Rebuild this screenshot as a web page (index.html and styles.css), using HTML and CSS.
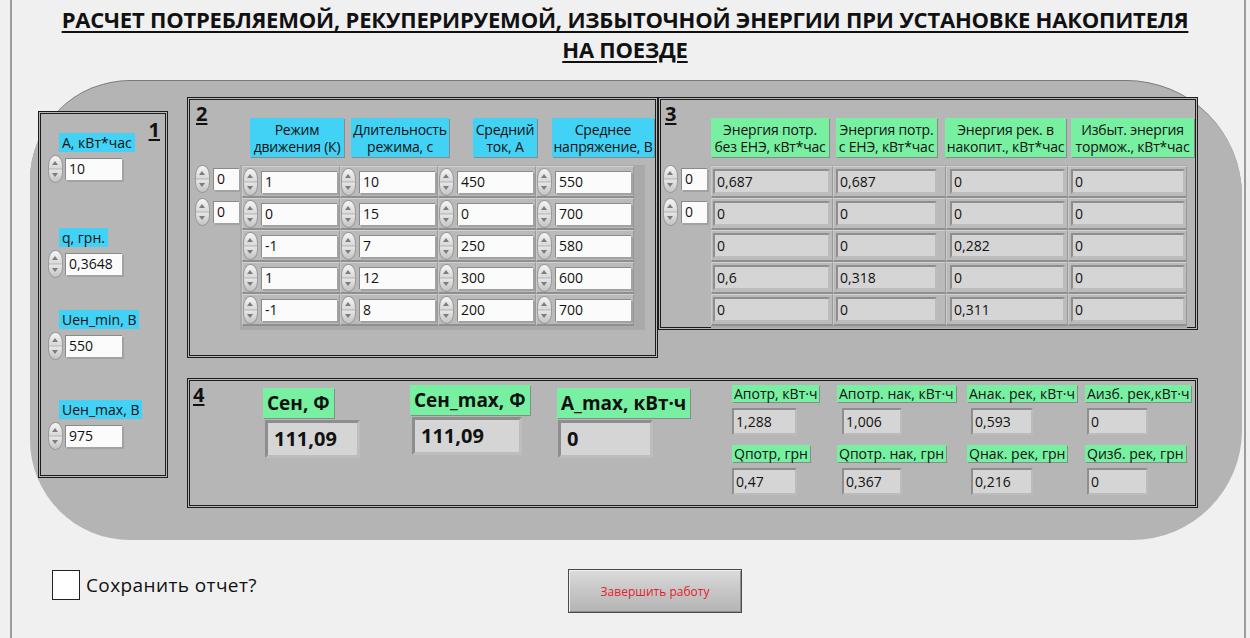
FILE: index.html
```html
<!DOCTYPE html>
<html lang="ru">
<head>
<meta charset="utf-8">
<title>Расчет энергии накопителя</title>
<link rel="stylesheet" href="styles.css">
</head>
<body>
<div class="window">
  <h1 class="title">РАСЧЕТ ПОТРЕБЛЯЕМОЙ, РЕКУПЕРИРУЕМОЙ, ИЗБЫТОЧНОЙ ЭНЕРГИИ ПРИ УСТАНОВКЕ НАКОПИТЕЛЯ<br>НА ПОЕЗДЕ</h1>

  <div class="deck">
    <!-- 1: input parameters -->
    <section class="panel p1">
      <div class="p1-head">
        <div class="ctl">
          <span class="lbl cyan">А, кВт*час</span>
          <div class="spinrow"><i class="spin"></i><span class="inp w57">10</span></div>
        </div>
        <div class="num">1</div>
      </div>
      <div class="ctl c2">
        <span class="lbl cyan">q, грн.</span>
        <div class="spinrow"><i class="spin"></i><span class="inp w57">0,3648</span></div>
      </div>
      <div class="ctl c3">
        <span class="lbl cyan">Uен_min, В</span>
        <div class="spinrow"><i class="spin"></i><span class="inp w57">550</span></div>
      </div>
      <div class="ctl c4">
        <span class="lbl cyan">Uен_max, В</span>
        <div class="spinrow"><i class="spin"></i><span class="inp w57">975</span></div>
      </div>
    </section>

    <div class="stack">
      <div class="top-row">
        <!-- 2: driving modes -->
        <section class="panel p2">
          <div class="phead">
            <div class="numcell n2"><span class="num">2</span></div>
            <div class="hdrs h2row">
              <div class="hdr cyan">Режим<br>движения (К)</div>
              <div class="hdr cyan">Длительность<br>режима, с</div>
              <div class="hdr cyan">Средний<br>ток, А</div>
              <div class="hdr cyan">Среднее<br>напряжение, В</div>
            </div>
          </div>
          <div class="pbody">
            <div class="idx i2">
              <div class="spinrow"><i class="spin"></i><span class="inp w26">0</span></div>
              <div class="spinrow"><i class="spin"></i><span class="inp w26">0</span></div>
            </div>
            <div class="arr arr2">
              <div class="slot"><i class="spin"></i><span class="inp w76">1</span></div>
              <div class="slot"><i class="spin"></i><span class="inp w76">10</span></div>
              <div class="slot"><i class="spin"></i><span class="inp w76">450</span></div>
              <div class="slot"><i class="spin"></i><span class="inp w76">550</span></div>

              <div class="slot"><i class="spin"></i><span class="inp w76">0</span></div>
              <div class="slot"><i class="spin"></i><span class="inp w76">15</span></div>
              <div class="slot"><i class="spin"></i><span class="inp w76">0</span></div>
              <div class="slot"><i class="spin"></i><span class="inp w76">700</span></div>

              <div class="slot"><i class="spin"></i><span class="inp w76">-1</span></div>
              <div class="slot"><i class="spin"></i><span class="inp w76">7</span></div>
              <div class="slot"><i class="spin"></i><span class="inp w76">250</span></div>
              <div class="slot"><i class="spin"></i><span class="inp w76">580</span></div>

              <div class="slot"><i class="spin"></i><span class="inp w76">1</span></div>
              <div class="slot"><i class="spin"></i><span class="inp w76">12</span></div>
              <div class="slot"><i class="spin"></i><span class="inp w76">300</span></div>
              <div class="slot"><i class="spin"></i><span class="inp w76">600</span></div>

              <div class="slot"><i class="spin"></i><span class="inp w76">-1</span></div>
              <div class="slot"><i class="spin"></i><span class="inp w76">8</span></div>
              <div class="slot"><i class="spin"></i><span class="inp w76">200</span></div>
              <div class="slot"><i class="spin"></i><span class="inp w76">700</span></div>
            </div>
          </div>
        </section>

        <!-- 3: energy per mode -->
        <section class="panel p3">
          <div class="phead">
            <div class="numcell n3"><span class="num">3</span></div>
            <div class="hdrs h3row">
              <div class="hdr green">Энергия потр.<br>без ЕНЭ, кВт*час</div>
              <div class="hdr green">Энергия потр.<br>с ЕНЭ, кВт*час</div>
              <div class="hdr green">Энергия рек. в<br>накопит., кВт*час</div>
              <div class="hdr green">Избыт. энергия<br>тормож., кВт*час</div>
            </div>
          </div>
          <div class="pbody">
            <div class="idx i3">
              <div class="spinrow"><i class="spin"></i><span class="inp w26">0</span></div>
              <div class="spinrow"><i class="spin"></i><span class="inp w26">0</span></div>
            </div>
            <div class="arr arr3">
              <div class="slot"><span class="ind">0,687</span></div>
              <div class="slot"><span class="ind">0,687</span></div>
              <div class="slot"><span class="ind">0</span></div>
              <div class="slot"><span class="ind">0</span></div>

              <div class="slot"><span class="ind">0</span></div>
              <div class="slot"><span class="ind">0</span></div>
              <div class="slot"><span class="ind">0</span></div>
              <div class="slot"><span class="ind">0</span></div>

              <div class="slot"><span class="ind">0</span></div>
              <div class="slot"><span class="ind">0</span></div>
              <div class="slot"><span class="ind">0,282</span></div>
              <div class="slot"><span class="ind">0</span></div>

              <div class="slot"><span class="ind">0,6</span></div>
              <div class="slot"><span class="ind">0,318</span></div>
              <div class="slot"><span class="ind">0</span></div>
              <div class="slot"><span class="ind">0</span></div>

              <div class="slot"><span class="ind">0</span></div>
              <div class="slot"><span class="ind">0</span></div>
              <div class="slot"><span class="ind">0,311</span></div>
              <div class="slot"><span class="ind">0</span></div>
            </div>
          </div>
        </section>
      </div>

      <!-- 4: totals -->
      <section class="panel p4">
        <div class="numcell n4"><span class="num">4</span></div>
        <div class="bigctl b1">
          <span class="big-lbl green">Сен, Ф</span>
          <span class="big-ind">111,09</span>
        </div>
        <div class="bigctl b2">
          <span class="big-lbl green">Сен_max, Ф</span>
          <span class="big-ind">111,09</span>
        </div>
        <div class="bigctl b3">
          <span class="big-lbl green">А_max, кВт·ч</span>
          <span class="big-ind">0</span>
        </div>
        <div class="mini">
          <div class="mctl"><span class="mlbl green">Апотр, кВт·ч</span><span class="ind mind">1,288</span></div>
          <div class="mctl"><span class="mlbl green">Апотр. нак, кВт·ч</span><span class="ind mind">1,006</span></div>
          <div class="mctl"><span class="mlbl green">Анак. рек, кВт·ч</span><span class="ind mind">0,593</span></div>
          <div class="mctl"><span class="mlbl green">Аизб. рек,кВт·ч</span><span class="ind mind">0</span></div>
          <div class="mctl"><span class="mlbl green">Qпотр, грн</span><span class="ind mind">0,47</span></div>
          <div class="mctl"><span class="mlbl green">Qпотр. нак, грн</span><span class="ind mind">0,367</span></div>
          <div class="mctl"><span class="mlbl green">Qнак. рек, грн</span><span class="ind mind">0,216</span></div>
          <div class="mctl"><span class="mlbl green">Qизб. рек, грн</span><span class="ind mind">0</span></div>
        </div>
      </section>
    </div>
  </div>

  <div class="footer">
    <label class="check"><span class="box"></span>Сохранить отчет?</label>
    <button class="stop" type="button">Завершить работу</button>
  </div>
</div>
</body>
</html>
```

FILE: styles.css
```css
* { box-sizing: border-box; }

html, body {
  margin: 0;
  padding: 0;
}

body {
  width: 1250px;
  height: 638px;
  overflow: hidden;
  background: #f0f0f0;
  font-family: "Open Sans", "Noto Sans", sans-serif;
  color: #111;
}

.window {
  margin-left: 10px;
  width: 1236px;
  height: 638px;
  border-left: 2px solid #9c9c9c;
  border-right: 2px solid #9c9c9c;
  background: #f0f0f0;
}

.title {
  margin: 0;
  height: 80px;
  padding: 4px 6px 0 0;
  font-size: 22px;
  font-weight: 700;
  line-height: 30px;
  letter-spacing: -0.21px;
  text-align: center;
  text-decoration: underline;
  text-decoration-thickness: 2px;
  text-underline-offset: 3px;
  color: #111;
}

/* big rounded grey plate behind the panels */
.deck {
  margin-left: 18px;
  width: 1212px;
  height: 460px;
  background: #b4b4b4;
  border-top: 1px solid #7a7a7a;
  border-radius: 100px 116px 110px 100px;
  padding: 16px 0 0 8px;
  display: flex;
  align-items: flex-start;
}

.panel {
  border: 3px double #1c1c1c;
  background: #b6b6b6;
}

.num {
  display: block;
  font-size: 20px;
  font-weight: 700;
  line-height: 24px;
  text-decoration: underline;
  text-decoration-thickness: 2px;
  text-underline-offset: 2px;
}

.cyan { background: #41d2f5; }
.green { background: #78f0a2; }

/* ---------- numeric controls ---------- */
.ctl {
  display: flex;
  flex-direction: column;
  align-items: flex-start;
}

.lbl {
  height: 19px;
  line-height: 19px;
  font-size: 14px;
  padding: 0 3px;
  white-space: nowrap;
  margin-left: 11px;
}

.spinrow {
  display: flex;
  align-items: center;
  gap: 2px;
  height: 28px;
  margin-top: 3px;
}

.spin {
  position: relative;
  display: block;
  flex: none;
  width: 15px;
  height: 28px;
  border: 1px solid #9a9a9a;
  border-radius: 7px / 11px;
  background: linear-gradient(180deg, #f4f4f4 0, #d9d9d9 47%, #a3a3a3 50%, #e6e6e6 53%, #c4c4c4 100%);
}

.spin::before,
.spin::after {
  content: "";
  position: absolute;
  left: 3px;
  border-left: 3.5px solid transparent;
  border-right: 3.5px solid transparent;
}

.spin::before {
  top: 5px;
  border-bottom: 4px solid #7c7c7c;
}

.spin::after {
  bottom: 5px;
  border-top: 4px solid #7c7c7c;
}

.inp {
  display: block;
  height: 22px;
  background: #fbfbfb;
  font-size: 14px;
  line-height: 20px;
  padding-left: 3px;
  border-top: 1px solid #8a8a8a;
  border-left: 1px solid #8a8a8a;
  box-shadow: 2px 2px 0 #a2a2a2;
  white-space: nowrap;
}

.w57 { width: 57px; }
.w26 { width: 26px; }
.w76 { width: 76px; }

.ind {
  display: block;
  height: 25px;
  background: #d5d5d5;
  font-size: 14px;
  line-height: 21px;
  padding-left: 2px;
  border-top: 2px solid #8e8e8e;
  border-left: 2px solid #8e8e8e;
  border-right: 2px solid #bcbcbc;
  border-bottom: 2px solid #bcbcbc;
  white-space: nowrap;
}

/* ---------- panel 1 ---------- */
.p1 {
  margin-top: 14px;
  width: 130px;
  height: 367px;
  padding-left: 7px;
  display: flex;
  flex-direction: column;
}

.p1-head {
  display: flex;
  justify-content: space-between;
  align-items: flex-start;
  padding-right: 5px;
}

.p1-head .ctl { margin-top: 19px; }
.p1-head .num { margin-top: 4px; }

.c2 { margin-top: 45px; }
.c3 { margin-top: 32px; }
.c4 { margin-top: 40px; }

/* ---------- right-hand stack ---------- */
.stack {
  margin-left: 19px;
  display: flex;
  flex-direction: column;
}

.top-row {
  display: flex;
  align-items: flex-start;
}

.phead {
  display: flex;
  align-items: flex-start;
}

.numcell { flex: none; }
.numcell .num { margin-top: 2px; }

.hdrs {
  display: flex;
  margin-top: 18px;
}

.hdr {
  height: 39px;
  font-size: 14px;
  line-height: 17px;
  letter-spacing: -0.2px;
  text-align: center;
  display: flex;
  align-items: center;
  justify-content: center;
  white-space: nowrap;
  box-shadow: 1px 1px 0 #8a8a8a;
}

.pbody {
  display: flex;
  align-items: flex-start;
  margin-top: 8px;
}

.idx {
  flex: none;
  display: flex;
  flex-direction: column;
  gap: 5px;
}

.idx .spinrow { margin-top: 0; gap: 3px; }

.arr {
  display: grid;
  grid-auto-rows: 32px;
  background: #a9a9a9;
}

.slot {
  display: flex;
  align-items: center;
  gap: 3px;
  background: #bababa;
  border-top: 1px solid #d2d2d2;
  border-left: 1px solid #cacaca;
  border-bottom: 2px solid #8f8f8f;
  border-right: 1px solid #999;
}

/* panel 2 */
.p2 {
  width: 471px;
  height: 261px;
}

.n2 { width: 60px; padding-left: 6px; }
.h2row .hdr:nth-child(1) { width: 94px; }
.h2row .hdr:nth-child(2) { width: 98px; margin-left: 7px; }
.h2row .hdr:nth-child(3) { width: 64px; margin-left: 24px; }
.h2row .hdr:nth-child(4) { width: 102px; margin-left: 15px; }

.i2 { width: 50px; padding-left: 5px; }

.arr2 {
  grid-template-columns: repeat(4, 98px);
  padding: 1px 11px 4px 2px;
}

.arr2 .slot { padding-left: 0; }

/* panel 3 */
.p3 {
  width: 540px;
  height: 233px;
}

.n3 { width: 50px; padding-left: 4px; }
.h3row .hdr:nth-child(1) { width: 118px; }
.h3row .hdr:nth-child(2) { width: 101px; margin-left: 7px; }
.h3row .hdr:nth-child(3) { width: 121px; margin-left: 8px; }
.h3row .hdr:nth-child(4) { width: 123px; margin-left: 5px; }

.i3 { width: 50px; padding-left: 2px; }

.arr3 {
  grid-template-columns: 122px 113px 122px 119px;
  padding: 1px 0 2px 0;
}

.arr3 .slot:nth-child(4n+1) { padding-left: 1px; }
.arr3 .slot:nth-child(4n+2) { padding-left: 2px; }
.arr3 .slot:nth-child(4n+3) { padding-left: 3px; }
.arr3 .slot:nth-child(4n+4) { padding-left: 2px; }
.arr3 .slot:nth-child(4n+1) .ind { width: 117px; }
.arr3 .slot:nth-child(4n+2) .ind { width: 101px; }
.arr3 .slot:nth-child(4n+3) .ind { width: 115px; }
.arr3 .slot:nth-child(4n+4) .ind { width: 114px; }

/* ---------- panel 4 ---------- */
.p4 {
  margin-top: 20px;
  width: 1011px;
  height: 130px;
  display: flex;
  align-items: flex-start;
}

.n4 { width: 73px; padding-left: 3px; }

.bigctl {
  flex: none;
  display: flex;
  flex-direction: column;
  align-items: flex-start;
}

.b1 { width: 147px; margin-top: 7px; }
.b2 { width: 147px; margin-top: 4px; }
.b3 { width: 175px; margin-top: 7px; }

.big-lbl {
  height: 30px;
  line-height: 30px;
  font-size: 19px;
  font-weight: 700;
  padding: 0 4px;
  white-space: nowrap;
  box-shadow: 1px 1px 0 #8a8a8a;
}

.big-ind {
  display: block;
  margin-top: 2px;
  margin-left: 2px;
  width: 95px;
  height: 38px;
  background: #d5d5d5;
  font-size: 20px;
  font-weight: 700;
  line-height: 32px;
  padding-left: 6px;
  border-top: 3px solid #8e8e8e;
  border-left: 3px solid #8e8e8e;
  border-right: 3px solid #bdbdbd;
  border-bottom: 3px solid #bdbdbd;
}

.b2 .big-ind { width: 110px; }
.b3 .big-ind { margin-left: 1px; }

.mini {
  display: grid;
  grid-template-columns: 105px 130px 118px 110px;
  row-gap: 10px;
  margin-top: 4px;
}

.mctl {
  display: flex;
  flex-direction: column;
  align-items: flex-start;
}

.mlbl {
  height: 17px;
  line-height: 17px;
  font-size: 14px;
  padding: 0 2px;
  white-space: nowrap;
  box-shadow: 1px 1px 0 #8a8a8a;
}

.mind {
  margin-top: 6px;
  width: 65px;
  height: 27px;
  line-height: 23px;
}

.mctl:nth-child(4n+2) .mind { width: 60px; margin-left: 5px; }
.mctl:nth-child(4n+3) .mind { width: 62px; margin-left: 4px; }
.mctl:nth-child(4n+4) .mind { width: 61px; margin-left: 2px; }

/* ---------- footer ---------- */
.footer {
  display: flex;
  align-items: flex-start;
  margin-top: 29px;
  padding-left: 40px;
}

.check {
  display: flex;
  align-items: center;
  gap: 6px;
  width: 516px;
  margin-top: 1px;
  font-size: 19px;
  letter-spacing: 0.4px;
  color: #111;
}

.box {
  width: 28px;
  height: 30px;
  background: #fff;
  border: 1px solid #222;
}

.stop {
  width: 174px;
  height: 44px;
  border: 1px solid #4a4a4a;
  background: linear-gradient(180deg, #dcdcdc 0, #c8c8c8 45%, #b4b4b4 100%);
  box-shadow: inset 1px 1px 0 #efefef, inset -1px -1px 0 #8f8f8f;
  font-family: "Open Sans", "Noto Sans", sans-serif;
  font-size: 12px;
  color: #e4202b;
  padding: 0;
}
```
